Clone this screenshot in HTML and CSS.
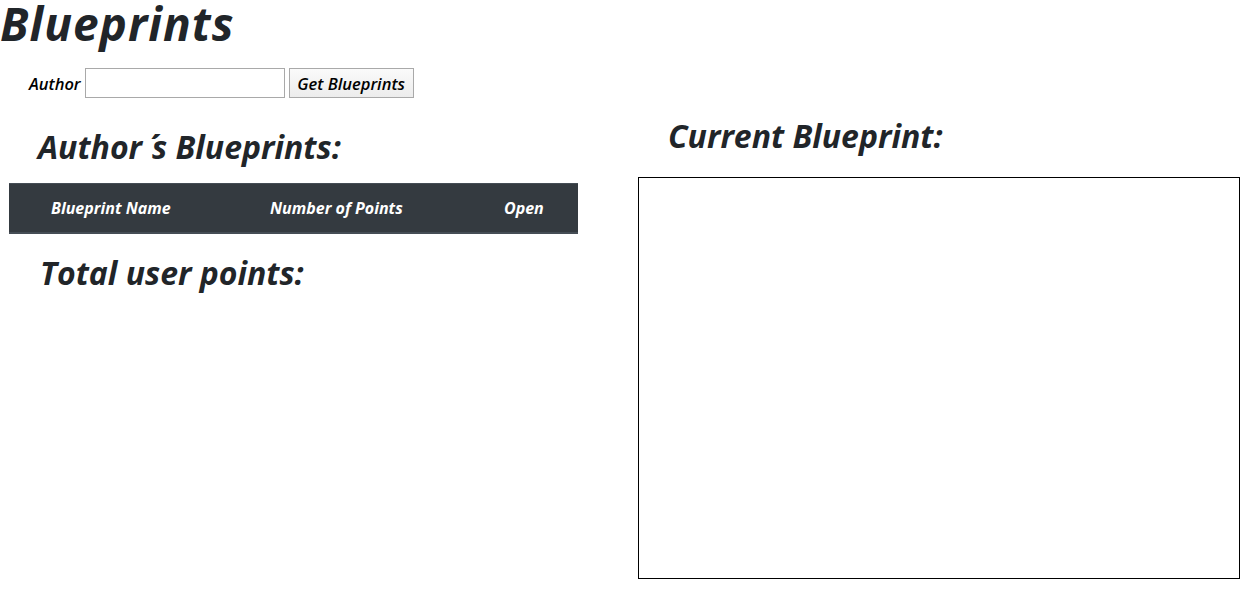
FILE: index.html
```html
<!DOCTYPE html>
<html>
<head>
<meta charset="utf-8">
<title>Blueprints</title>
<link rel="stylesheet" href="styles.css">
</head>
<body>
<h1 class="title">Blueprints</h1>
<div class="search">
  <label class="search-label" for="author">Author</label>
  <input class="search-input" id="author" type="text">
  <button class="search-btn" type="button">Get Blueprints</button>
</div>
<div class="columns">
  <section class="col-left">
    <h2 class="heading heading-authors">Author<span class="apos">´</span>s Blueprints:</h2>
    <table class="bp-table">
      <thead>
        <tr>
          <th class="c1">Blueprint Name</th>
          <th class="c2">Number of Points</th>
          <th class="c3">Open</th>
        </tr>
      </thead>
    </table>
    <h2 class="heading heading-total">Total user points:</h2>
  </section>
  <section class="col-right">
    <h2 class="heading heading-current">Current Blueprint:</h2>
    <canvas class="board" width="600" height="400"></canvas>
  </section>
</div>
</body>
</html>
```
FILE: styles.css
```css
html, body {
  margin: 0;
  padding: 0;
  background: #fff;
}
body {
  font-family: "Open Sans", "Lato", sans-serif;
  font-style: italic;
  color: #212529;
}
.title {
  margin: 0;
  font-size: 46px;
  line-height: 46px;
  font-weight: 700;
  letter-spacing: 1px;
  height: 48px;
}
.search {
  display: flex;
  align-items: center;
  gap: 4px;
  margin-top: 20px;
  padding-left: 29px;
  height: 30px;
}
.search-label {
  font-size: 16.5px;
  font-weight: 600;
  color: #000;
}
.search-input {
  width: 200px;
  height: 30px;
  box-sizing: border-box;
  border: 1px solid #a9a9a9;
  padding: 0 4px;
  margin: 0;
}
.search-btn {
  height: 30px;
  width: 125px;
  box-sizing: border-box;
  border: 1px solid #a9a9a9;
  background: linear-gradient(#fafafa, #ececec);
  font-family: inherit;
  font-style: italic;
  font-weight: 600;
  font-size: 16.5px;
  color: #000;
  padding: 0;
  margin: 0;
}
.columns {
  display: flex;
}
.col-left {
  width: 569px;
  margin-left: 9px;
}
.col-right {
  margin-left: 60px;
}
.heading {
  margin: 0;
  font-size: 32px;
  line-height: 38px;
  font-weight: 700;
}
.apos {
  display: inline-block;
  margin: 0 4px 0 6px;
}
.heading-authors {
  margin-top: 30px;
  margin-bottom: 17px;
  padding-left: 29px;
}
.heading-total {
  margin-top: 20px;
  padding-left: 31px;
}
.heading-current {
  margin-top: 19px;
  margin-bottom: 22px;
  padding-left: 30px;
}
.bp-table {
  width: 569px;
  border-collapse: collapse;
  background: #343a40;
  color: #fff;
  table-layout: fixed;
}
.bp-table th {
  padding: 12px 0;
  font-size: 16px;
  line-height: 24px;
  font-weight: 700;
  text-align: left;
  border-top: 1px solid #454d55;
  border-bottom: 2px solid #454d55;
  white-space: nowrap;
}
.bp-table .c1 { width: 162px; padding-left: 42px; }
.bp-table .c2 { width: 193px; padding-left: 57px; }
.bp-table .c3 { padding-left: 41px; }
.board {
  display: block;
  width: 600px;
  height: 400px;
  border: 1px solid #000;
}
```
